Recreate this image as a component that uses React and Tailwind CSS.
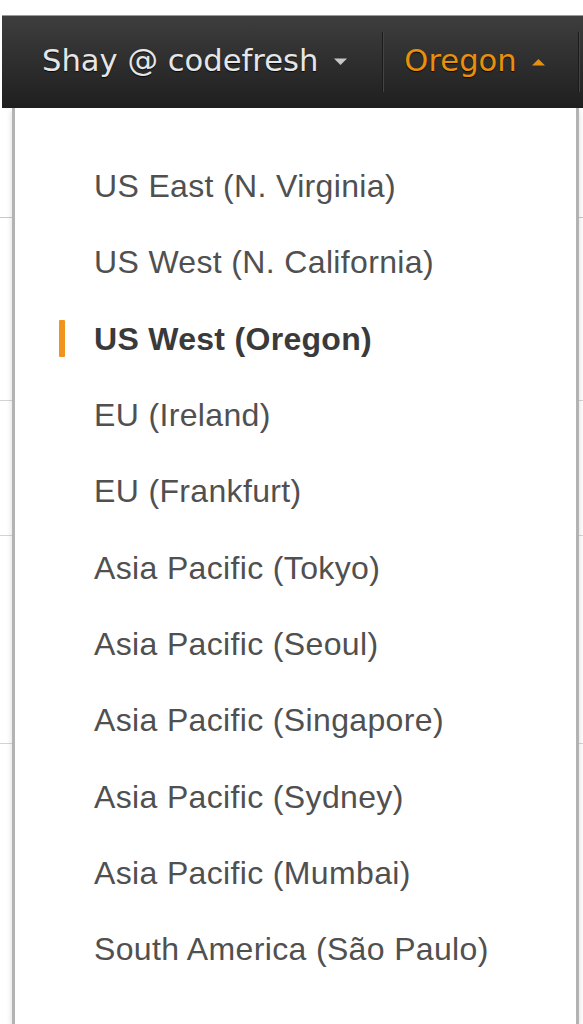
const regions = [
  "US East (N. Virginia)",
  "US West (N. California)",
  "US West (Oregon)",
  "EU (Ireland)",
  "EU (Frankfurt)",
  "Asia Pacific (Tokyo)",
  "Asia Pacific (Seoul)",
  "Asia Pacific (Singapore)",
  "Asia Pacific (Sydney)",
  "Asia Pacific (Mumbai)",
  "South America (São Paulo)",
];

const selected = "US West (Oregon)";

function Caret({ up, color }) {
  return (
    <svg width="15" height="8" viewBox="0 0 15 8" className="shrink-0">
      <path d={up ? "M1 7.5 L7.5 1 L14 7.5 Z" : "M1 0.5 L7.5 7 L14 0.5 Z"} fill={color} />
    </svg>
  );
}

function Divider() {
  return (
    <div className="flex h-[60px] shrink-0">
      <span className="w-px bg-[#1b1b1b]" />
      <span className="w-px bg-[#444]" />
    </div>
  );
}

export default function App() {
  return (
    <div className="relative h-[1024px] w-[583px] overflow-hidden bg-white">
      {/* the page behind the open menu */}
      <div className="pt-[217px]">
        <div className="h-[183px] border-t border-[#c8c8c8]" />
        <div className="h-[135px] border-t border-[#d4d4d4]" />
        <div className="h-[208px] border-t border-[#d4d4d4]" />
        <div className="border-t border-[#d4d4d4]" />
      </div>

      <div className="absolute inset-x-0 top-[15px] bottom-0 flex flex-col">
        <header className="ml-[2px] flex h-[93px] shrink-0 items-center border-t border-[#9a9a9a] bg-gradient-to-b from-[#3e3e3e] to-[#1f1f1f] pl-[40px] font-[DejaVu_Sans,sans-serif] text-[30.6px] [text-shadow:0_1px_1px_rgba(0,0,0,0.8)]">
          <span className="pb-[2px] text-[#e6e6e6]">Shay @ codefresh</span>
          <span className="ml-[15px] mr-[34px]">
            <Caret color="#c8c8c8" />
          </span>
          <Divider />
          <span className="ml-[20px] pb-[2px] text-[#e8900c]">Oregon</span>
          <span className="ml-[14px] mr-[32px]">
            <Caret up color="#e8900c" />
          </span>
          <Divider />
        </header>

        <div className="relative z-0 ml-[12px] w-[567px] flex-1 border-x-[3px] border-[#b3b3b3] bg-white pt-[40px] shadow-[0_2px_6px_rgba(0,0,0,0.15)]">
          <ul className="font-[Liberation_Sans,Arial,sans-serif] text-[32px]">
            {regions.map((r) => {
              const active = r === selected;
              return (
                <li key={r} className="flex h-[76.3px] items-center">
                  <span
                    className={
                      active
                        ? "ml-[44px] mr-[29px] h-[37px] w-[6px] rounded-[1px] bg-[#f0941e]"
                        : "ml-[44px] mr-[29px] w-[6px]"
                    }
                  />
                  <span
                    className={
                      active
                        ? "font-bold tracking-[0.3px] text-[#3a3a3a]"
                        : "tracking-[0.35px] text-[#505050]"
                    }
                  >
                    {r}
                  </span>
                </li>
              );
            })}
          </ul>
        </div>
      </div>
    </div>
  );
}
